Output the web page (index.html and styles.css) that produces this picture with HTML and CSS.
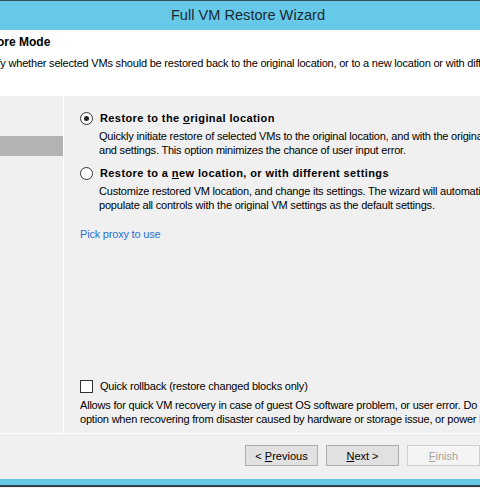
FILE: index.html
```html
<!DOCTYPE html>
<html>
<head>
<meta charset="utf-8">
<link rel="stylesheet" href="styles.css">
</head>
<body>
<div class="window">
  <div class="topline"></div>
  <div class="titlebar">Full VM Restore Wizard</div>
  <div class="header">
    <div class="h-title">Restore Mode</div>
    <div class="h-desc">Specify whether selected VMs should be restored back to the original location, or to a new location or with different settings.</div>
  </div>
  <div class="main">
    <div class="sidebar">
      <div class="side-sel"></div>
    </div>
    <div class="content">
      <div class="option">
        <div class="opt-row">
          <span class="radio checked"><span class="dot"></span></span>
          <span class="opt-label">Restore to the <u>o</u>riginal location</span>
        </div>
        <div class="opt-desc">Quickly initiate restore of selected VMs to the original location, and with the original VM name<br>and settings. This option minimizes the chance of user input error.</div>
      </div>
      <div class="option second">
        <div class="opt-row">
          <span class="radio"></span>
          <span class="opt-label">Restore to a <u>n</u>ew location, or with different settings</span>
        </div>
        <div class="opt-desc">Customize restored VM location, and change its settings. The wizard will automatically<br>populate all controls with the original VM settings as the default settings.</div>
      </div>
      <div class="link">Pick proxy to use</div>
      <div class="spacer"></div>
      <div class="check-row">
        <span class="checkbox"></span>
        <span class="check-label">Quick rollback (restore changed blocks only)</span>
      </div>
      <div class="check-desc">Allows for quick VM recovery in case of guest OS software problem, or user error. Do not use this<br>option when recovering from disaster caused by hardware or storage issue, or power loss.</div>
    </div>
  </div>
  <div class="footer">
    <button class="btn">&lt; <u>P</u>revious</button>
    <button class="btn"><u>N</u>ext &gt;</button>
    <button class="btn disabled"><u>F</u>inish</button>
  </div>
  <div class="bottombar"></div>
  <div class="bottomline"></div>
</div>
</body>
</html>
```
FILE: styles.css
```css
html, body {
  margin: 0;
  padding: 0;
  width: 480px;
  height: 488px;
  overflow: hidden;
  background: #f0f0f0;
}
.window {
  width: 480px;
  height: 488px;
  display: flex;
  flex-direction: column;
  font-family: "Liberation Sans", Arial, sans-serif;
  font-size: 11px;
  letter-spacing: -0.2px;
  color: #000;
  overflow: hidden;
}
.topline {
  height: 1px;
  background: #3b4d58;
  flex: none;
}
.titlebar {
  height: 29px;
  flex: none;
  background: #66c9e8;
  color: #1b2a35;
  font-size: 14.6px;
  letter-spacing: 0;
  line-height: 29px;
  padding-left: 16px;
  text-align: center;
  white-space: nowrap;
}
.header {
  height: 66px;
  flex: none;
  background: #fff;
  white-space: nowrap;
  overflow: hidden;
}
.h-title {
  font-weight: bold;
  font-size: 12px;
  letter-spacing: 0;
  margin-left: -29px;
  margin-top: 5px;
  line-height: 14px;
}
.h-desc {
  margin-left: -29px;
  margin-top: 7px;
  line-height: 14px;
}
.main {
  height: 337px;
  flex: none;
  display: flex;
}
.sidebar {
  width: 63px;
  flex: none;
  border-right: 1px solid #fff;
}
.side-sel {
  margin-top: 40px;
  height: 20px;
  background: #b3b3b3;
}
.content {
  flex: 1;
  display: flex;
  flex-direction: column;
  padding-left: 16px;
  white-space: nowrap;
  overflow: hidden;
}
.option {
  margin-top: 14px;
}
.option.second {
  margin-top: 8px;
}
.opt-row {
  display: flex;
  align-items: center;
  gap: 7px;
  height: 16px;
}
.radio {
  width: 11px;
  height: 11px;
  border: 1px solid #333;
  border-radius: 50%;
  background: #fff;
  display: flex;
  align-items: center;
  justify-content: center;
  flex: none;
}
.dot {
  width: 5px;
  height: 5px;
  border-radius: 50%;
  background: #222;
}
.opt-label {
  font-weight: bold;
  font-size: 11px;
  letter-spacing: 0.4px;
}
.opt-desc {
  margin-left: 19px;
  margin-top: 3px;
  line-height: 14px;
}
.link {
  margin-top: 15px;
  color: #2a6fd6;
  line-height: 14px;
}
.spacer {
  flex: 1;
}
.check-row {
  display: flex;
  align-items: center;
  gap: 7px;
  height: 16px;
}
.checkbox {
  width: 11px;
  height: 11px;
  border: 1px solid #333;
  background: #fff;
  flex: none;
}
.check-desc {
  margin-top: 4px;
  line-height: 14px;
  margin-bottom: 7px;
}
.footer {
  height: 46px;
  flex: none;
  border-top: 1px solid #fff;
  display: flex;
  align-items: flex-start;
  padding-top: 11px;
  padding-left: 245px;
  gap: 8px;
  box-sizing: border-box;
}
.btn {
  width: 73px;
  height: 21px;
  flex: none;
  margin: 0;
  padding: 0;
  background: #e1e1e1;
  border: 1px solid #adadad;
  font-family: "Liberation Sans", Arial, sans-serif;
  font-size: 11px;
  color: #000;
}
.btn.disabled {
  background: #f4f4f4;
  border-color: #cdcdcd;
  color: #a3a3a3;
}
.bottombar {
  height: 6px;
  flex: none;
  background: #66c9e8;
}
.bottomline {
  height: 2px;
  flex: none;
  background: #2f3f49;
}
```
